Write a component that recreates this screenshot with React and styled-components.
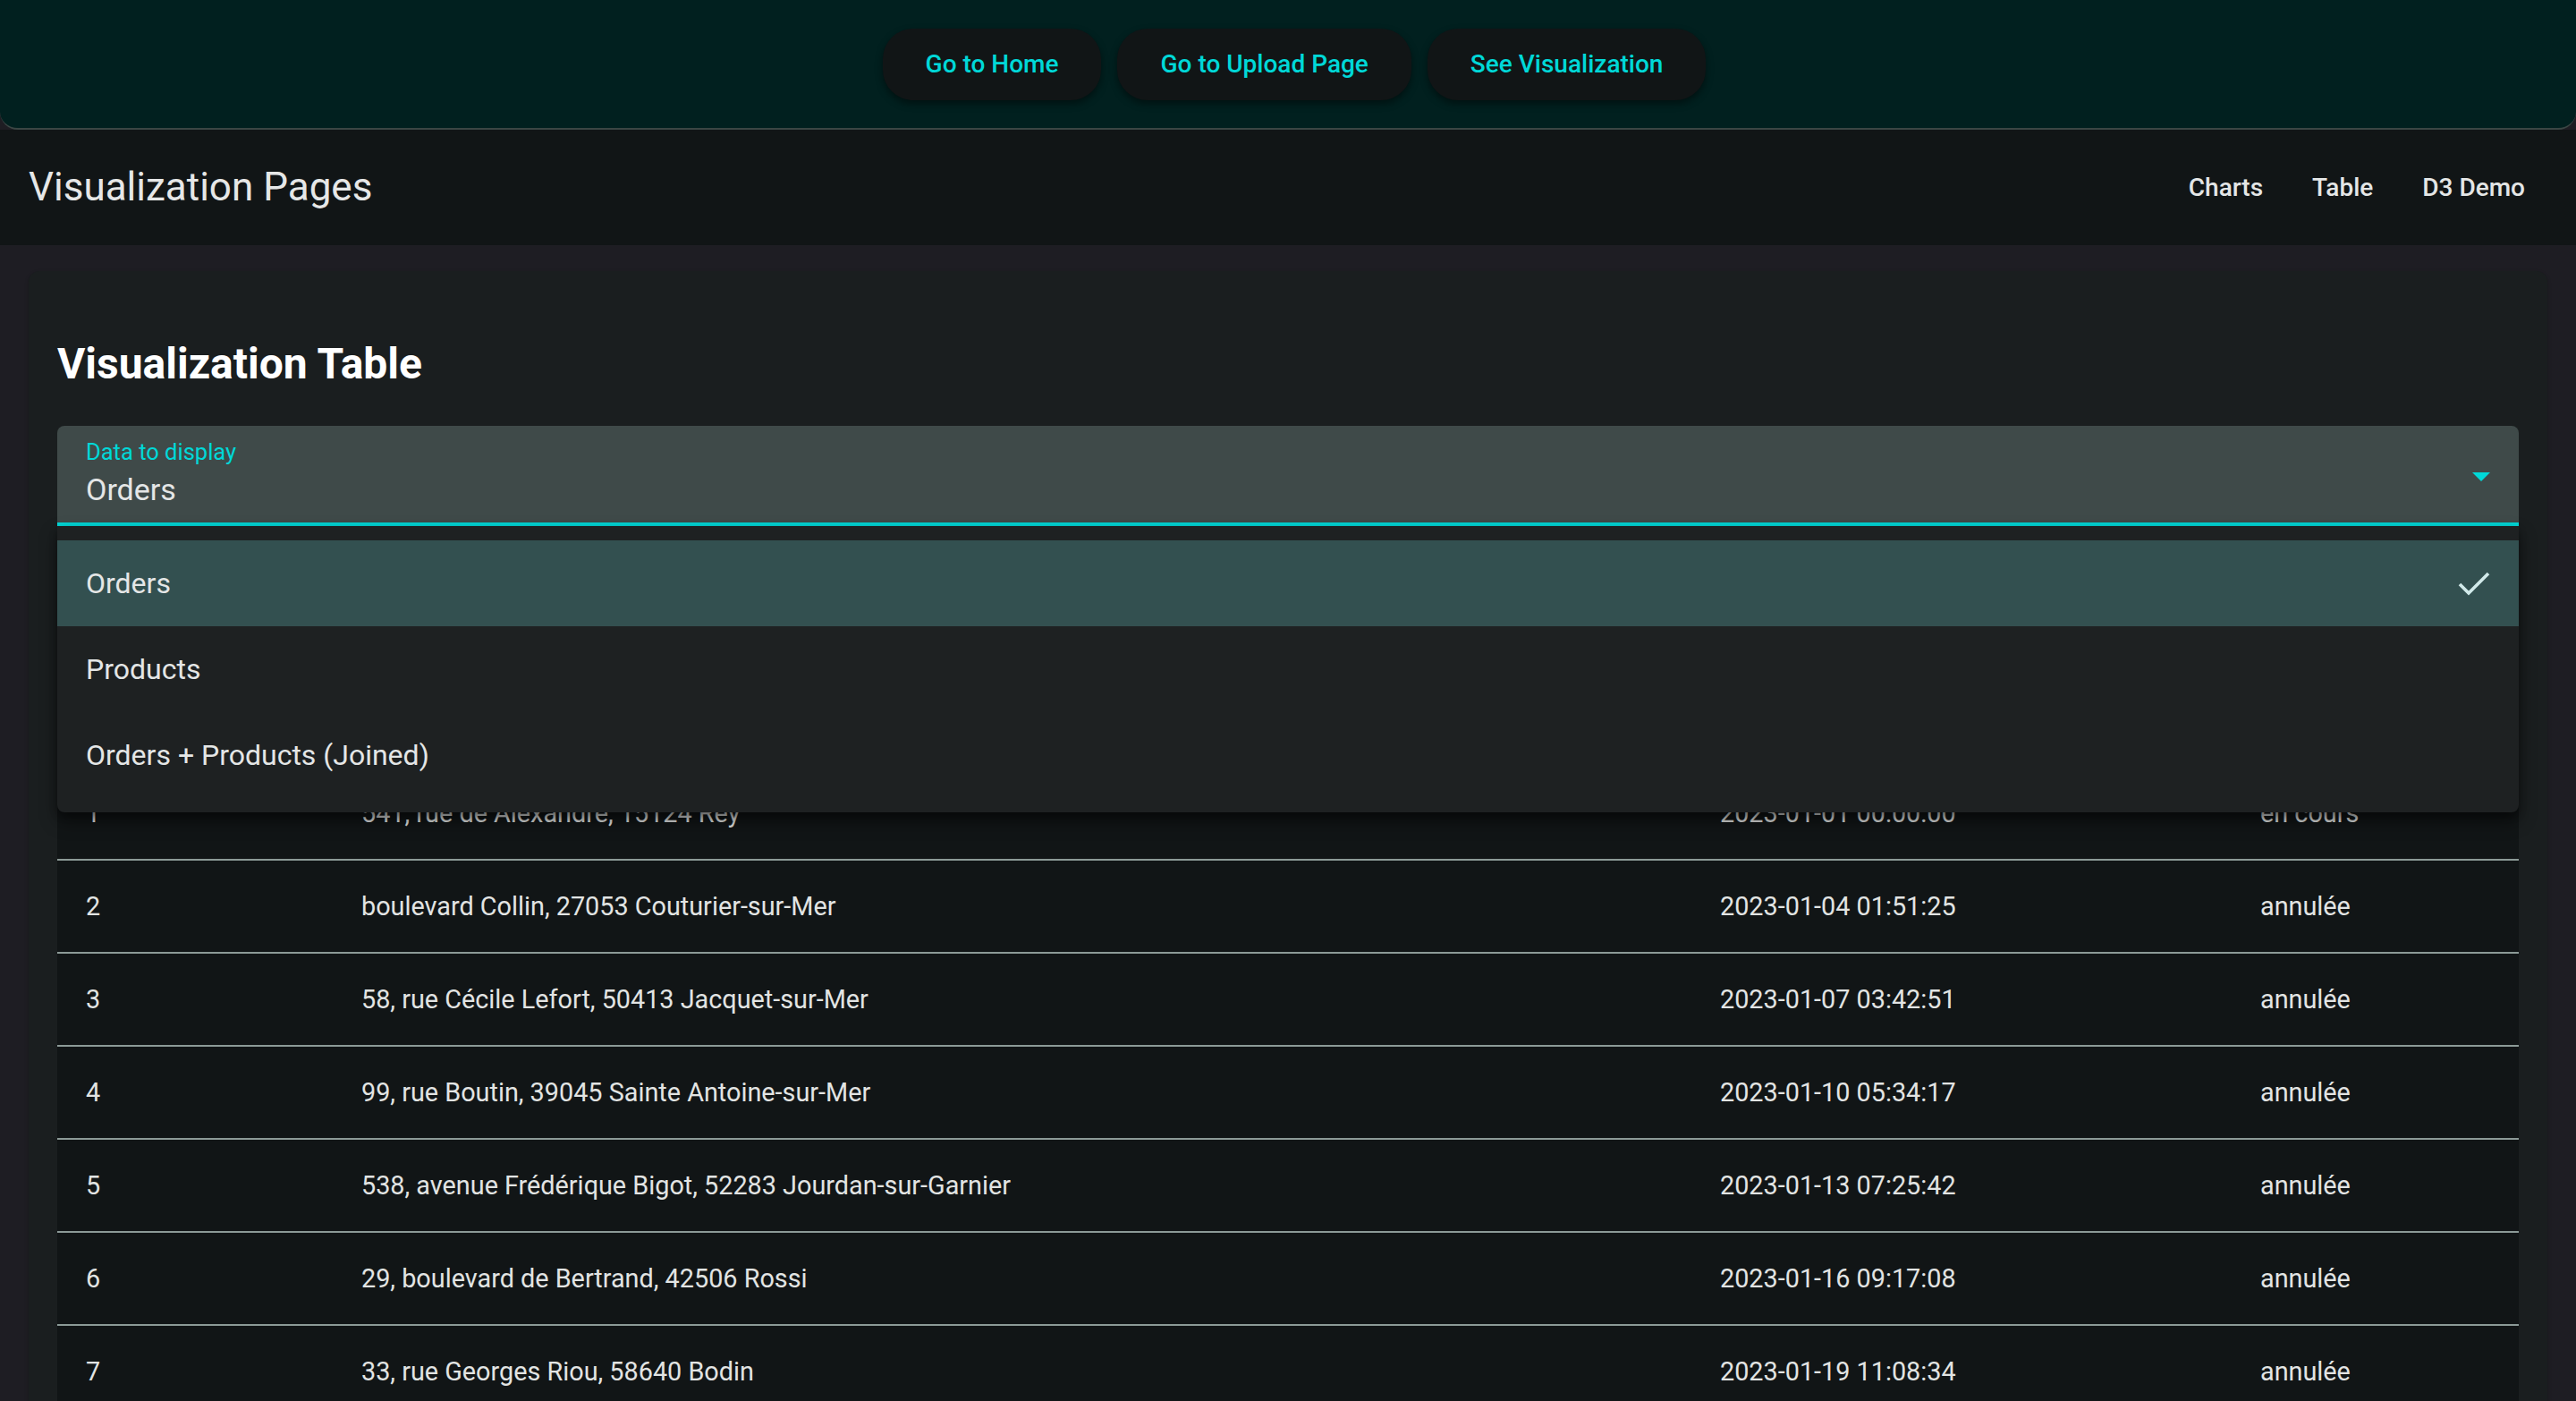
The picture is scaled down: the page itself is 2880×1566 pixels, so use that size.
import React from "react";
import styled, { createGlobalStyle } from "styled-components";

const Global = createGlobalStyle`
  html, body { margin: 0; padding: 0; background: #1e1d23; }
  body { font-family: Roboto, "Noto Sans", "Liberation Sans", sans-serif; color: #e2e4e3; }
  * { box-sizing: border-box; }
`;

const TopBar = styled.nav`
  height: 145px;
  background: #01201f;
  border-bottom: 2px solid #3b4644;
  border-radius: 0 0 20px 20px;
  display: flex;
  align-items: center;
  justify-content: center;
  gap: 18px;
  padding-left: 14px;
`;

const PillButton = styled.button`
  height: 80px;
  padding: 0 48px;
  border: none;
  border-radius: 34px;
  background: #111516;
  color: #00d8d8;
  font-family: Roboto, sans-serif;
  font-size: 28px;
  font-weight: 500;
  box-shadow: 0 4px 8px rgba(0, 0, 0, 0.45);
  cursor: pointer;
`;

const Header = styled.header`
  height: 129px;
  background: #111516;
  display: flex;
  align-items: center;
  justify-content: space-between;
  padding: 0 47px 0 32px;
`;

const SiteTitle = styled.h1`
  margin: 0;
  font-size: 44px;
  font-weight: 400;
  color: #e6e7e7;
  line-height: 1.2;
`;

const NavLinks = styled.div`
  display: flex;
  gap: 35px;
`;

const NavLink = styled.a`
  padding: 0 10px;
  font-size: 28px;
  font-weight: 500;
  color: #e4e6e6;
  text-decoration: none;
`;

const Main = styled.main`
  padding: 29px 32px 32px;
`;

const Card = styled.section`
  background: #1a1e1f;
  border-radius: 12px;
  padding: 32px;
  box-shadow: 0 2px 4px rgba(0, 0, 0, 0.25);
`;

const Heading = styled.h2`
  margin: 43px 0 40px;
  font-size: 48px;
  font-weight: 700;
  line-height: 1.2;
  color: #ffffff;
`;

const SelectWrap = styled.div`
  position: relative;
`;

const SelectBox = styled.div`
  height: 112px;
  background: #3f4a49;
  border-radius: 8px 8px 0 0;
  border-bottom: 4px solid #00d8d8;
  padding: 17px 32px 0;
  display: flex;
  align-items: flex-start;
  justify-content: space-between;
`;

const SelectText = styled.div`
  display: flex;
  flex-direction: column;
`;

const SelectLabel = styled.span`
  font-size: 25.5px;
  line-height: 25px;
  color: #00d8d8;
  margin-bottom: 6px;
`;

const SelectValue = styled.span`
  font-size: 34px;
  line-height: 46px;
  color: #e4e6e6;
`;

const Caret = styled.div`
  margin-top: 35px;
  width: 0;
  height: 0;
  border-left: 10px solid transparent;
  border-right: 10px solid transparent;
  border-top: 10px solid #00d8d8;
`;

const Menu = styled.ul`
  position: absolute;
  left: 0;
  right: 0;
  top: 100%;
  margin: 0;
  padding: 16px 0;
  list-style: none;
  background: #1e2122;
  border-radius: 0 0 8px 8px;
  box-shadow: 0 10px 20px rgba(0, 0, 0, 0.45), 0 4px 8px rgba(0, 0, 0, 0.3);
  z-index: 10;
`;

const MenuItem = styled.li`
  height: 96px;
  padding: 0 32px;
  display: flex;
  align-items: center;
  justify-content: space-between;
  font-size: 32px;
  color: #e4e6e6;
  background: ${(p) => (p.$selected ? "#335050" : "transparent")};
`;

const Table = styled.table`
  width: 100%;
  margin-top: 165px;
  border-collapse: collapse;
  table-layout: fixed;
  background: #111516;
`;

const HeadCell = styled.th`
  height: 104px;
  padding: 0 32px;
  text-align: left;
  font-size: 28px;
  font-weight: 500;
  color: #e4e6e6;
  border-bottom: 2px solid #8c9a97;
`;

const Cell = styled.td`
  padding: 31px 32px;
  font-size: 28.8px;
  line-height: 40px;
  color: #e2e4e3;
  white-space: nowrap;
  border-bottom: 2px solid #8c9a97;
`;

const CheckIcon = () => (
  <svg width="36" height="28" viewBox="0 0 36 28" aria-hidden="true">
    <polyline
      points="2,15 12,25 34,3"
      fill="none"
      stroke="#d2eaea"
      strokeWidth="3.6"
      strokeLinecap="butt"
      strokeLinejoin="miter"
    />
  </svg>
);

const rows = [
  ["1", "541, rue de Alexandre, 15124 Rey", "2023-01-01 00:00:00", "en cours"],
  ["2", "boulevard Collin, 27053 Couturier-sur-Mer", "2023-01-04 01:51:25", "annulée"],
  ["3", "58, rue Cécile Lefort, 50413 Jacquet-sur-Mer", "2023-01-07 03:42:51", "annulée"],
  ["4", "99, rue Boutin, 39045 Sainte Antoine-sur-Mer", "2023-01-10 05:34:17", "annulée"],
  ["5", "538, avenue Frédérique Bigot, 52283 Jourdan-sur-Garnier", "2023-01-13 07:25:42", "annulée"],
  ["6", "29, boulevard de Bertrand, 42506 Rossi", "2023-01-16 09:17:08", "annulée"],
  ["7", "33, rue Georges Riou, 58640 Bodin", "2023-01-19 11:08:34", "annulée"],
];

const options = ["Orders", "Products", "Orders + Products (Joined)"];

export default function App() {
  return (
    <>
      <Global />
      <TopBar>
        <PillButton>Go to Home</PillButton>
        <PillButton>Go to Upload Page</PillButton>
        <PillButton>See Visualization</PillButton>
      </TopBar>
      <Header>
        <SiteTitle>Visualization Pages</SiteTitle>
        <NavLinks>
          <NavLink href="#">Charts</NavLink>
          <NavLink href="#">Table</NavLink>
          <NavLink href="#">D3 Demo</NavLink>
        </NavLinks>
      </Header>
      <Main>
        <Card>
          <Heading>Visualization Table</Heading>
          <SelectWrap>
            <SelectBox>
              <SelectText>
                <SelectLabel>Data to display</SelectLabel>
                <SelectValue>Orders</SelectValue>
              </SelectText>
              <Caret />
            </SelectBox>
            <Menu>
              {options.map((o, i) => (
                <MenuItem key={o} $selected={i === 0}>
                  {o}
                  {i === 0 && <CheckIcon />}
                </MenuItem>
              ))}
            </Menu>
          </SelectWrap>
          <Table>
            <colgroup>
              <col style={{ width: 308 }} />
              <col style={{ width: 1519 }} />
              <col style={{ width: 604 }} />
              <col style={{ width: 321 }} />
            </colgroup>
            <thead>
              <tr>
                <HeadCell>ID</HeadCell>
                <HeadCell>Adresse</HeadCell>
                <HeadCell>Date</HeadCell>
                <HeadCell>Statut</HeadCell>
              </tr>
            </thead>
            <tbody>
              {rows.map((r) => (
                <tr key={r[0]}>
                  {r.map((c, j) => (
                    <Cell key={j}>{c}</Cell>
                  ))}
                </tr>
              ))}
            </tbody>
          </Table>
        </Card>
      </Main>
    </>
  );
}
